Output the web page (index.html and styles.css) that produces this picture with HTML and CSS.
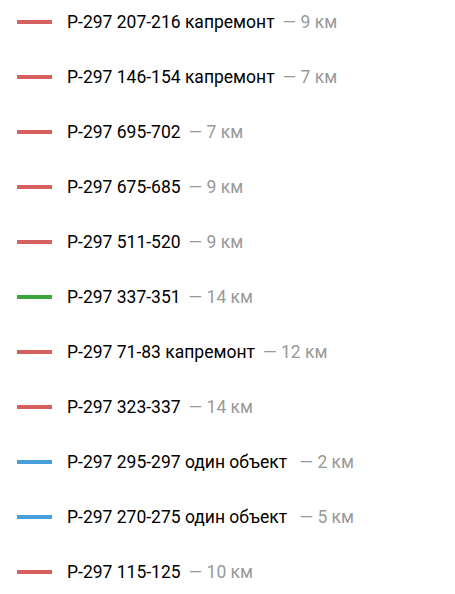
FILE: index.html
```html
<!DOCTYPE html>
<html lang="ru">
<head>
    <meta charset="UTF-8">
    <title>Участки</title>
    <link rel="stylesheet" href="styles.css">
</head>
<body>

<ul class="legend">
    <li class="item"><span class="swatch red"></span><span class="name">Р-297 207-216 капремонт</span><span class="len">— 9 км</span></li>
    <li class="item"><span class="swatch red"></span><span class="name">Р-297 146-154 капремонт</span><span class="len">— 7 км</span></li>
    <li class="item"><span class="swatch red"></span><span class="name">Р-297 695-702</span><span class="len">— 7 км</span></li>
    <li class="item"><span class="swatch red"></span><span class="name">Р-297 675-685</span><span class="len">— 9 км</span></li>
    <li class="item"><span class="swatch red"></span><span class="name">Р-297 511-520</span><span class="len">— 9 км</span></li>
    <li class="item"><span class="swatch green"></span><span class="name">Р-297 337-351</span><span class="len">— 14 км</span></li>
    <li class="item"><span class="swatch red"></span><span class="name">Р-297 71-83 капремонт</span><span class="len">— 12 км</span></li>
    <li class="item"><span class="swatch red"></span><span class="name">Р-297 323-337</span><span class="len">— 14 км</span></li>
    <li class="item"><span class="swatch blue"></span><span class="name">Р-297 295-297 один объект&nbsp;</span><span class="len">— 2 км</span></li>
    <li class="item"><span class="swatch blue"></span><span class="name">Р-297 270-275 один объект&nbsp;</span><span class="len">— 5 км</span></li>
    <li class="item"><span class="swatch red"></span><span class="name">Р-297 115-125</span><span class="len">— 10 км</span></li>
</ul>

</body>
</html>
```

FILE: styles.css
```css
body {
    margin: 0;
    background-color: #fff;
    font-family: Roboto, "Liberation Sans", sans-serif;
    color: #000;
}
.legend {
    list-style: none;
    margin: 0;
    padding: 0 0 0 17px;
    display: flex;
    flex-direction: column;
    gap: 11px;
}
.item {
    display: flex;
    align-items: center;
    height: 44px;
    font-size: 17.5px;
}
.swatch {
    width: 35px;
    height: 4px;
    margin-right: 15px;
    flex-shrink: 0;
}
.red {
    background-color: #d6605e;
}
.green {
    background-color: #3ca63a;
}
.blue {
    background-color: #479fdc;
}
.len {
    margin-left: 8px;
    color: #999;
}
```
